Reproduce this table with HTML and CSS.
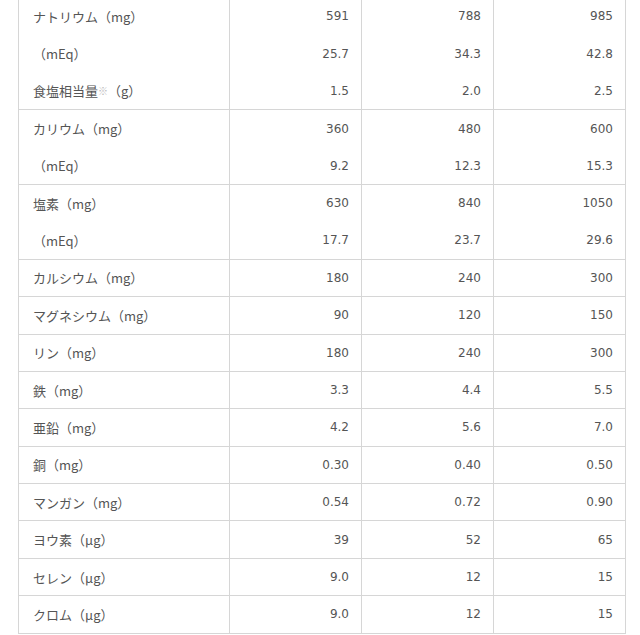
FILE: index.html
```html
<!DOCTYPE html>
<html lang="ja">
<head>
<meta charset="utf-8">
<title>栄養成分表</title>
<link rel="stylesheet" href="styles.css">
</head>
<body>
<table class="nutri">
  <colgroup>
    <col class="c-label">
    <col class="c-num">
    <col class="c-num">
    <col class="c-num">
  </colgroup>
  <tbody>
    <tr><td class="lbl">ナトリウム（mg）</td><td>591</td><td>788</td><td>985</td></tr>
    <tr class="sub"><td class="lbl">（mEq）</td><td>25.7</td><td>34.3</td><td>42.8</td></tr>
    <tr class="sub"><td class="lbl">食塩相当量<span class="note">※</span>（g）</td><td>1.5</td><td>2.0</td><td>2.5</td></tr>
    <tr><td class="lbl">カリウム（mg）</td><td>360</td><td>480</td><td>600</td></tr>
    <tr class="sub"><td class="lbl">（mEq）</td><td>9.2</td><td>12.3</td><td>15.3</td></tr>
    <tr><td class="lbl">塩素（mg）</td><td>630</td><td>840</td><td>1050</td></tr>
    <tr class="sub"><td class="lbl">（mEq）</td><td>17.7</td><td>23.7</td><td>29.6</td></tr>
    <tr><td class="lbl">カルシウム（mg）</td><td>180</td><td>240</td><td>300</td></tr>
    <tr><td class="lbl">マグネシウム（mg）</td><td>90</td><td>120</td><td>150</td></tr>
    <tr><td class="lbl">リン（mg）</td><td>180</td><td>240</td><td>300</td></tr>
    <tr><td class="lbl">鉄（mg）</td><td>3.3</td><td>4.4</td><td>5.5</td></tr>
    <tr><td class="lbl">亜鉛（mg）</td><td>4.2</td><td>5.6</td><td>7.0</td></tr>
    <tr><td class="lbl">銅（mg）</td><td>0.30</td><td>0.40</td><td>0.50</td></tr>
    <tr><td class="lbl">マンガン（mg）</td><td>0.54</td><td>0.72</td><td>0.90</td></tr>
    <tr><td class="lbl">ヨウ素（μg）</td><td>39</td><td>52</td><td>65</td></tr>
    <tr><td class="lbl">セレン（μg）</td><td>9.0</td><td>12</td><td>15</td></tr>
    <tr><td class="lbl">クロム（μg）</td><td>9.0</td><td>12</td><td>15</td></tr>
  </tbody>
</table>
</body>
</html>
```
FILE: styles.css
```css
html, body {
  margin: 0;
  padding: 0;
  background: #fff;
}

.nutri {
  margin: -3px 0 0 18px;
  width: 607px;
  border-collapse: collapse;
  table-layout: fixed;
  font-family: "DejaVu Sans", "Noto Sans CJK JP", sans-serif;
  font-size: 12px;
  color: #555;
}

.c-label { width: 211px; }
.c-num { width: 132px; }

.nutri td {
  height: 37.4px;
  padding: 0 12px 0 0;
  border: 1px solid #d6d6d6;
  text-align: right;
  vertical-align: middle;
  box-sizing: border-box;
}

.nutri .sub td {
  border-top: none;
}

.nutri tr:has(+ .sub) td {
  border-bottom: none;
}

.nutri td.lbl {
  text-align: left;
  padding: 0 0 0 14px;
  font-family: "Noto Sans CJK JP", sans-serif;
  font-size: 13px;
}

.note {
  font-size: 10px;
  color: #bbb;
  vertical-align: 1px;
}
```
